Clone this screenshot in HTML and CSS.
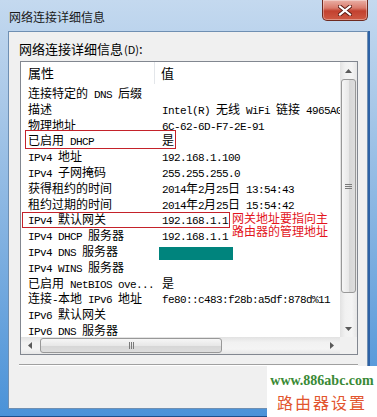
FILE: index.html
```html
<!DOCTYPE html>
<html lang="zh-CN">
<head>
    <meta charset="UTF-8">
    <title>网络连接详细信息</title>
    <link rel="stylesheet" href="styles.css">
</head>
<body>
    <div class="window">
        <div class="titlebar">
            <span class="title">网络连接详细信息</span>
            <div class="close">
                <svg width="14" height="11" viewBox="0 0 14 11">
                    <path d="M2 1.5 L12 9.5 M12 1.5 L2 9.5" stroke="#5a1a12" stroke-width="4" stroke-linecap="square"/>
                    <path d="M2 1.5 L12 9.5 M12 1.5 L2 9.5" stroke="#ffffff" stroke-width="2.2" stroke-linecap="square"/>
                </svg>
            </div>
        </div>

        <div class="panel">
            <div class="label">网络连接详细信息<span class="acc">(D)</span>:</div>

            <div class="listview">
                <div class="view">
                    <div class="header">
                        <div class="k">属性</div>
                        <div class="v">值</div>
                    </div>
                    <div class="rows">
                        <div class="row"><div class="k">连接特定的<span class="m"> DNS </span>后缀</div><div class="v"></div></div>
                        <div class="row"><div class="k">描述</div><div class="v"><span class="m">Intel(R) </span>无线<span class="m"> WiFi </span>链接<span class="m"> 4965AGN</span></div></div>
                        <div class="row"><div class="k">物理地址</div><div class="v"><span class="m">6C-62-6D-F7-2E-91</span></div></div>
                        <div class="row"><div class="k">已启用<span class="m"> DHCP</span></div><div class="v">是</div></div>
                        <div class="row"><div class="k"><span class="m">IPv4 </span>地址</div><div class="v"><span class="m">192.168.1.100</span></div></div>
                        <div class="row"><div class="k"><span class="m">IPv4 </span>子网掩码</div><div class="v"><span class="m">255.255.255.0</span></div></div>
                        <div class="row"><div class="k">获得租约的时间</div><div class="v"><span class="m">2014</span>年<span class="m">2</span>月<span class="m">25</span>日<span class="m"> 13:54:43</span></div></div>
                        <div class="row"><div class="k">租约过期的时间</div><div class="v"><span class="m">2014</span>年<span class="m">2</span>月<span class="m">25</span>日<span class="m"> 15:54:42</span></div></div>
                        <div class="row"><div class="k"><span class="m">IPv4 </span>默认网关</div><div class="v"><span class="m">192.168.1.1</span></div></div>
                        <div class="row"><div class="k"><span class="m">IPv4 DHCP </span>服务器</div><div class="v"><span class="m">192.168.1.1</span></div></div>
                        <div class="row"><div class="k"><span class="m">IPv4 DNS </span>服务器</div><div class="v"><span class="redact"></span></div></div>
                        <div class="row"><div class="k"><span class="m">IPv4 WINS </span>服务器</div><div class="v"></div></div>
                        <div class="row"><div class="k">已启用<span class="m"> NetBIOS ove...</span></div><div class="v">是</div></div>
                        <div class="row"><div class="k">连接<span class="m">-</span>本地<span class="m"> IPv6 </span>地址</div><div class="v"><span class="m">fe80::c483:f28b:a5df:878d%11</span></div></div>
                        <div class="row"><div class="k"><span class="m">IPv6 </span>默认网关</div><div class="v"></div></div>
                        <div class="row"><div class="k"><span class="m">IPv6 DNS </span>服务器</div><div class="v"></div></div>

                        <!-- 标注 -->
                        <div class="mark mark-dhcp"></div>
                        <div class="mark mark-gw"></div>
                        <div class="note">网关地址要指向主<br>路由器的管理地址</div>
                    </div>
                </div>

                <div class="vscroll">
                    <div class="sbtn">
                        <svg width="7" height="4" viewBox="0 0 7 4"><path d="M0 4 L3.5 0 L7 4 Z" fill="#5a5a5a"/></svg>
                    </div>
                    <div class="vthumb"><span class="grip-h"></span></div>
                    <div class="fill"></div>
                    <div class="sbtn">
                        <svg width="7" height="4" viewBox="0 0 7 4"><path d="M0 0 L7 0 L3.5 4 Z" fill="#5a5a5a"/></svg>
                    </div>
                </div>

                <div class="hscroll">
                    <div class="sbtn">
                        <svg width="4" height="7" viewBox="0 0 4 7"><path d="M4 0 L4 7 L0 3.5 Z" fill="#5a5a5a"/></svg>
                    </div>
                    <div class="hthumb"><span class="grip-v"></span></div>
                    <div class="fill"></div>
                    <div class="sbtn">
                        <svg width="4" height="7" viewBox="0 0 4 7"><path d="M0 0 L4 3.5 L0 7 Z" fill="#5a5a5a"/></svg>
                    </div>
                </div>

                <div class="corner"></div>
            </div>

            <div class="sep"></div>
        </div>

        <div class="watermark">
            <div class="site">www.886abc.com</div>
            <div class="brand">路由器设置</div>
        </div>
    </div>
</body>
</html>
```

FILE: styles.css
```css
* {
    box-sizing: border-box;
}
body {
    margin: 0;
    padding: 0;
    background-color: #ffffff;
    font-family: "Noto Sans CJK SC", sans-serif;
}
.window {
    position: relative;
    width: 377px;
    height: 417px;
    display: flex;
    flex-direction: column;
    overflow: hidden;
    background: linear-gradient(180deg, #c4d9ef 0%, #a9c8e8 25%, #7eafe0 60%, #4a92d8 100%);
    box-shadow: inset 0 -1px 0 #1d4f8c;
}
.titlebar {
    height: 31px;
    flex-shrink: 0;
    display: flex;
    justify-content: space-between;
    align-items: flex-start;
    padding-left: 9px;
}
.title {
    margin-top: 9px;
    font-size: 12px;
    line-height: 16px;
    color: #1a1a1a;
}
.close {
    width: 46px;
    height: 21px;
    margin-right: 9px;
    border: 1px solid #6e2a20;
    border-top: none;
    border-radius: 0 0 5px 5px;
    background: linear-gradient(180deg, #eab0a6 0%, #d97b6c 40%, #c2412f 55%, #cf5a44 100%);
    box-shadow: inset 0 0 0 1px rgba(255, 255, 255, 0.35);
    display: flex;
    align-items: center;
    justify-content: center;
}
.panel {
    flex: 1;
    margin: 0 9px 8px 8px;
    background-color: #f0f0f0;
    border: 1px solid #6f8fb2;
    display: flex;
    flex-direction: column;
    box-shadow: 2px 0 0 #2d62a6;
}
.label {
    padding: 8px 0 0 10px;
    height: 26px;
    margin-bottom: 3px;
    font-size: 13px;
    line-height: 18px;
    color: #000;
}
.acc {
    font-size: 11px;
    margin-left: 1px;
}
.listview {
    margin-left: 11px;
    width: 338px;
    height: 294px;
    flex-shrink: 0;
    border: 1px solid #828790;
    background-color: #fff;
    display: grid;
    grid-template-columns: 319px 17px;
    grid-template-rows: 275px 17px;
}
.view {
    overflow: hidden;
    display: flex;
    flex-direction: column;
}
.header {
    height: 22px;
    flex-shrink: 0;
    display: flex;
    font-size: 13px;
    line-height: 22px;
    color: #000;
}
.header .k {
    width: 134px;
    padding-left: 7px;
    border-right: 1px solid #e3e6ea;
}
.header .v {
    padding-left: 6px;
}
.rows {
    position: relative;
    flex: 1;
    padding-top: 1px;
}
.row {
    display: flex;
    height: 15.8px;
    line-height: 15.8px;
    font-size: 12px;
    white-space: nowrap;
    color: #000;
}
.row .k {
    width: 134px;
    flex-shrink: 0;
    padding-left: 7px;
}
.row .v {
    padding-left: 7px;
}
.m {
    font-family: "Liberation Mono", monospace;
    font-size: 11px;
    letter-spacing: -0.6px;
}
.redact {
    display: inline-block;
    width: 74px;
    height: 13px;
    margin-left: -3px;
    vertical-align: -4px;
    background-color: #00847d;
}
.mark {
    position: absolute;
    border: 1px solid #c4222a;
}
.mark-dhcp {
    left: 4px;
    top: 46px;
    width: 151px;
    height: 19px;
}
.mark-gw {
    left: 1px;
    top: 128px;
    width: 208px;
    height: 16px;
}
.note {
    position: absolute;
    left: 211px;
    top: 127px;
    font-size: 12px;
    line-height: 13px;
    color: #e3141c;
    white-space: nowrap;
}
.sbtn {
    width: 17px;
    height: 17px;
    flex-shrink: 0;
    display: flex;
    align-items: center;
    justify-content: center;
}
.fill {
    flex: 1;
}
.vscroll {
    display: flex;
    flex-direction: column;
    align-items: center;
    background: linear-gradient(90deg, #e2e2e2 0%, #f1f1f1 30%, #f4f4f4 70%, #e6e6e6 100%);
}
.vthumb {
    width: 15px;
    height: 214px;
    border: 1px solid #989898;
    border-radius: 3px;
    background: linear-gradient(90deg, #f6f6f6 0%, #e8e8e8 50%, #d6d6d6 51%, #dddddd 100%);
    display: flex;
    align-items: center;
    justify-content: center;
}
.grip-h {
    width: 7px;
    height: 5px;
    background: repeating-linear-gradient(180deg, #7a7a7a 0, #7a7a7a 1px, transparent 1px, transparent 2px);
}
.hscroll {
    display: flex;
    align-items: center;
    background: linear-gradient(180deg, #e2e2e2 0%, #f1f1f1 30%, #f4f4f4 70%, #e6e6e6 100%);
}
.hthumb {
    margin-left: 2px;
    width: 182px;
    height: 15px;
    border: 1px solid #989898;
    border-radius: 3px;
    background: linear-gradient(180deg, #f6f6f6 0%, #e8e8e8 50%, #d6d6d6 51%, #dddddd 100%);
    display: flex;
    align-items: center;
    justify-content: center;
}
.grip-v {
    width: 5px;
    height: 7px;
    background: repeating-linear-gradient(90deg, #7a7a7a 0, #7a7a7a 1px, transparent 1px, transparent 2px);
}
.corner {
    background-color: #f0f0f0;
}
.sep {
    margin: 9px 9px 0 10px;
    border-top: 1px solid #a0a0a0;
    border-bottom: 1px solid #ffffff;
}
.watermark {
    position: absolute;
    right: 0;
    bottom: 0;
    width: 110px;
    height: 51px;
    background-color: #ffffff;
    text-align: center;
}
.site {
    margin-top: 7px;
    font-family: "Liberation Serif", serif;
    font-weight: bold;
    font-size: 14px;
    line-height: 16px;
    color: #3a8a36;
}
.brand {
    margin-top: 3px;
    font-size: 16px;
    line-height: 20px;
    letter-spacing: 2px;
    color: #e2552e;
}
```
